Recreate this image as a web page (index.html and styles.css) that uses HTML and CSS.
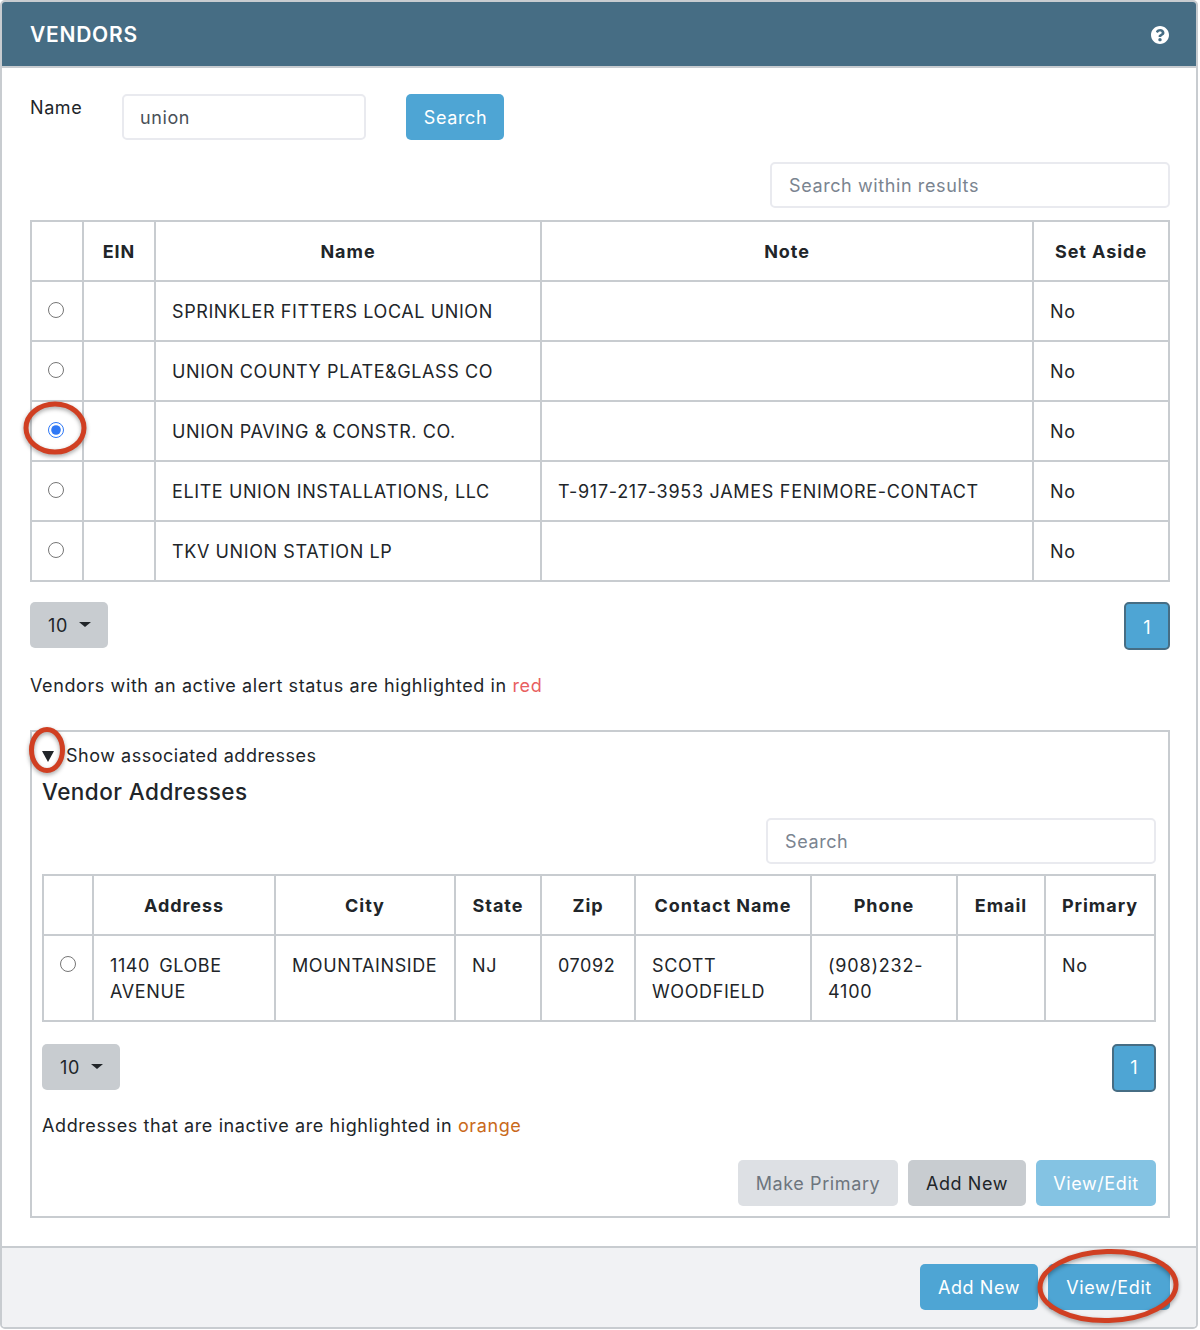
FILE: index.html
```html
<!DOCTYPE html>
<html lang="en">
<head>
<meta charset="utf-8">
<title>Vendors</title>
<link rel="stylesheet" href="styles.css">
</head>
<body>
<div class="card">
  <header class="card-header">
    <h1 class="card-title">VENDORS</h1>
    <svg class="help" viewBox="8 8 496 496" width="18" height="18"><path fill="#fff" d="M504 256c0 137-111 248-248 248S8 393 8 256 119 8 256 8s248 111 248 248zM262.700 90c-54.500 0-89.300 23-116.500 63.800-3.500 5.300-2.400 12.400 2.700 16.300l34.700 26.300c5.200 3.900 12.600 3 16.700-2.100 17.900-22.700 30.100-35.800 57.300-35.800 20.400 0 45.700 13.100 45.700 32.900 0 15-12.400 22.700-32.500 34C247.100 238.500 216 254.900 216 296v4c0 6.600 5.400 12 12 12h56c6.600 0 12-5.400 12-12v-1.300c0-28.500 83.200-29.700 83.200-106.700 0-58-60.200-102-116.500-102zM256 338c-25.400 0-46 20.600-46 46 0 25.400 20.600 46 46 46s46-20.600 46-46c0-25.400-20.600-46-46-46z"/></svg>
  </header>
  <div class="card-body">
    <form class="search-row">
      <label class="search-label">Name</label>
      <input class="field name-field" type="text" value="union">
      <button class="btn btn-info btn-search" type="button">Search</button>
    </form>
    <div class="filter-row"><input class="field filter-wide" type="text" placeholder="Search within results"></div>
    <table class="grid vendors">
      <colgroup><col class="v1"><col class="v2"><col class="v3"><col class="v4"><col class="v5"></colgroup>
      <thead><tr><th></th><th>EIN</th><th>Name</th><th>Note</th><th>Set Aside</th></tr></thead>
      <tbody>
        <tr><td class="radio-cell"><input type="radio" name="v"></td><td></td><td>SPRINKLER FITTERS LOCAL UNION</td><td></td><td>No</td></tr>
        <tr><td class="radio-cell"><input type="radio" name="v"></td><td></td><td>UNION COUNTY PLATE&amp;GLASS CO</td><td></td><td>No</td></tr>
        <tr><td class="radio-cell"><input type="radio" name="v" checked></td><td></td><td>UNION PAVING &amp; CONSTR. CO.</td><td></td><td>No</td></tr>
        <tr><td class="radio-cell"><input type="radio" name="v"></td><td></td><td>ELITE UNION INSTALLATIONS, LLC</td><td class="note-cell">T-917-217-3953 JAMES FENIMORE-CONTACT</td><td>No</td></tr>
        <tr><td class="radio-cell"><input type="radio" name="v"></td><td></td><td>TKV UNION STATION LP</td><td></td><td>No</td></tr>
      </tbody>
    </table>
    <div class="pager">
      <button class="btn btn-size" type="button">10<span class="caret"></span></button>
      <button class="page-btn" type="button">1</button>
    </div>
    <p class="note vendors-note">Vendors with an active alert status are highlighted in <span class="red">red</span></p>
    <section class="details">
      <div class="summary"><span class="tri"></span>Show associated addresses</div>
      <h2 class="sub-title">Vendor Addresses</h2>
      <div class="filter-row inner"><input class="field filter-inner" type="text" placeholder="Search"></div>
      <table class="grid addresses">
        <colgroup><col class="a1"><col class="a2"><col class="a3"><col class="a4"><col class="a5"><col class="a6"><col class="a7"><col class="a8"><col class="a9"></colgroup>
        <thead><tr><th></th><th>Address</th><th>City</th><th>State</th><th>Zip</th><th>Contact Name</th><th>Phone</th><th>Email</th><th>Primary</th></tr></thead>
        <tbody>
          <tr><td class="radio-cell"><input type="radio" name="a"></td><td class="street-cell">1140 GLOBE AVENUE</td><td>MOUNTAINSIDE</td><td>NJ</td><td>07092</td><td>SCOTT WOODFIELD</td><td class="phone-cell">(908)232-4100</td><td></td><td>No</td></tr>
        </tbody>
      </table>
      <div class="pager inner-pager">
        <button class="btn btn-size" type="button">10<span class="caret"></span></button>
        <button class="page-btn narrow" type="button">1</button>
      </div>
      <p class="note addr-note">Addresses that are inactive are highlighted in <span class="orange">orange</span></p>
      <div class="actions">
        <button class="btn btn-muted" type="button">Make Primary</button>
        <button class="btn btn-grey" type="button">Add New</button>
        <button class="btn btn-faded" type="button">View/Edit</button>
      </div>
    </section>
  </div>
  <footer class="card-footer">
    <button class="btn btn-info foot-add" type="button">Add New</button>
    <button class="btn btn-info foot-edit" type="button">View/Edit</button>
  </footer>
  <svg class="mark mark-radio" viewBox="0 0 66 58" width="66" height="58"><ellipse cx="33" cy="28" rx="29" ry="24" /></svg>
  <svg class="mark mark-tri" viewBox="0 0 40 52" width="40" height="52"><ellipse cx="19" cy="25" rx="15.500" ry="20.500" /></svg>
  <svg class="mark mark-edit" viewBox="0 0 146 78" width="146" height="78"><ellipse cx="72" cy="38" rx="68" ry="34.500" transform="rotate(-1.500 72 38)" /></svg>
</div>
</body>
</html>
```
FILE: styles.css
```css
* { box-sizing: border-box; }
html, body { margin: 0; padding: 0; background: #fff; }
body {
  width: 1200px;
  height: 1330px;
  font-family: Inter, "Liberation Sans", sans-serif;
  font-size: 18px;
  line-height: 26px;
  letter-spacing: 0.6px;
  color: #212529;
  overflow: hidden;
}
.card {
  position: relative;
  width: 1198px;
  height: 1329px;
  border: 2px solid #c8ccd0;
  border-radius: 5px;
  background: #fff;
  display: flex;
  flex-direction: column;
}
.card-header {
  height: 66px;
  flex: none;
  background: #466d84;
  border-bottom: 2px solid #c8ccd0;
  border-radius: 3px 3px 0 0;
  padding: 2px 27px 0 28px;
  display: flex;
  align-items: center;
  justify-content: space-between;
}
.card-title { margin: 0; font-size: 21px; font-weight: 600; color: #fff; letter-spacing: 0.75px; }
.help { display: block; }
.card-body { flex: 1; padding: 26px 26px 28px 28px; display: flex; flex-direction: column; }
.search-row { display: flex; align-items: flex-start; height: 46px; }
.search-label { width: 92px; line-height: 26px; padding-top: 1px; }
.field {
  height: 46px;
  border: 2px solid #e9eaef;
  border-radius: 5px;
  padding: 0 16px;
  font: inherit;
  letter-spacing: inherit;
  color: #495057;
  background: #fff;
  outline: none;
}
.field::placeholder { color: #7a8490; opacity: 1; }
.name-field { width: 244px; margin-right: 40px; }
.btn {
  height: 46px;
  border: 0;
  border-radius: 5px;
  font: inherit;
  letter-spacing: inherit;
  padding: 2px 18px 0;
  white-space: nowrap;
}
.btn-info { background: #4ea5d4; color: #fff; }
.btn-search { width: 98px; padding-left: 1px; padding-right: 0; }
.filter-row { display: flex; justify-content: flex-end; margin-top: 22px; height: 46px; }
.filter-wide { width: 400px; padding-left: 17px; }
.grid { border-collapse: separate; border-spacing: 0; table-layout: fixed; }
.grid th, .grid td { border-left: 2px solid #c8ccd0; border-top: 2px solid #c8ccd0; text-align: left; }
.grid th:last-child, .grid td:last-child { border-right: 2px solid #c8ccd0; }
.grid tbody tr:last-child td { border-bottom: 2px solid #c8ccd0; }
.grid th { height: 60px; font-weight: 700; letter-spacing: 0.95px; text-align: center; vertical-align: middle; padding: 2px 8px 0; }
.grid td { padding: 17px 16px 15px; vertical-align: top; }
.grid td.note-cell { letter-spacing: 0.71px; }
.grid td.phone-cell { letter-spacing: 0.8px; }
.grid td.street-cell { word-spacing: 3.500px; }
.vendors { width: 1140px; margin-top: 12px; }
.v1 { width: 52px; } .v2 { width: 72px; } .v3 { width: 386px; } .v4 { width: 492px; } .v5 { width: 138px; }
.grid td.radio-cell { padding: 0; text-align: center; }
.radio-cell input { width: 16px; height: 16px; margin: 20px 0 0; display: inline-block; vertical-align: top; accent-color: #2f78f5; }
.vendors .radio-cell input { margin-right: 2px; }
.pager { display: flex; justify-content: space-between; align-items: flex-start; margin-top: 20px; height: 48px; }
.btn-size { width: 78px; padding: 2px 0 0 18px; text-align: left; background: #c8ccd0; color: #212529; }
.btn-grey { width: 118px; background: #c8ccd0; color: #212529; padding-left: 0; padding-right: 0; }
.caret {
  display: inline-block;
  margin-left: 11px;
  vertical-align: 5px;
  border-top: 5px solid #212529;
  border-left: 6px solid transparent;
  border-right: 6px solid transparent;
}
.page-btn {
  width: 46px;
  height: 48px;
  border: 2px solid #466d84;
  border-radius: 5px;
  background: #4ea5d4;
  color: #fff;
  font: inherit;
  padding: 3px 0 0;
}
.page-btn.narrow { width: 44px; padding-top: 0; }
.note { margin: 0; }
.vendors-note { margin-top: 23px; }
.red { color: #e8605f; }
.orange { color: #c9691a; }
.details {
  margin-top: 31px;
  height: 488px;
  border: 2px solid #c8ccd0;
  padding: 11px 12px 10px 10px;
  display: flex;
  flex-direction: column;
}
.summary { height: 26px; display: flex; align-items: center; letter-spacing: 0.52px; }
.tri {
  width: 0; height: 0;
  margin: 1px 12px 0 0;
  border-top: 11px solid #212529;
  border-left: 6px solid transparent;
  border-right: 6px solid transparent;
}
.sub-title { margin: 7px 0 0; font-size: 22.500px; line-height: 32px; font-weight: 500; letter-spacing: 0.45px; }
.filter-row.inner { margin-top: 10px; }
.filter-inner { width: 390px; padding-left: 17px; }
.addresses { width: 1114px; margin-top: 10px; }
.a1 { width: 50px; } .a2 { width: 182px; } .a3 { width: 180px; } .a4 { width: 86px; } .a5 { width: 94px; } .a6 { width: 176px; } .a7 { width: 146px; } .a8 { width: 88px; } .a9 { width: 112px; }
.inner-pager { margin-top: 22px; }
.addr-note { margin-top: 21px; }
.actions { display: flex; justify-content: flex-end; gap: 10px; margin-top: 21px; }
.btn-muted { width: 160px; padding-left: 0; padding-right: 0; background: #dde0e4; color: #6d757d; }
.btn-faded { width: 120px; padding-left: 0; padding-right: 0; background: #84c3e3; color: #fff; }
.card-footer {
  flex: none;
  height: 81px;
  border-top: 2px solid #c8ccd0;
  background: #f1f2f4;
  border-radius: 0 0 3px 3px;
  padding: 16px 26px 0 0;
  display: flex;
  align-items: flex-start;
  justify-content: flex-end;
  gap: 10px;
}
.foot-add { width: 118px; padding-left: 0; padding-right: 0; }
.foot-edit { width: 122px; padding-left: 0; padding-right: 0; }
.mark { position: absolute; overflow: visible; filter: drop-shadow(0 2px 2px rgba(0,0,0,.35)); }
.mark ellipse { fill: none; stroke: #d03f22; stroke-width: 5px; }
.mark-radio { left: 20px; top: 398px; }
.mark-tri { left: 26px; top: 723px; }
.mark-edit { left: 1034px; top: 1246px; }
```
